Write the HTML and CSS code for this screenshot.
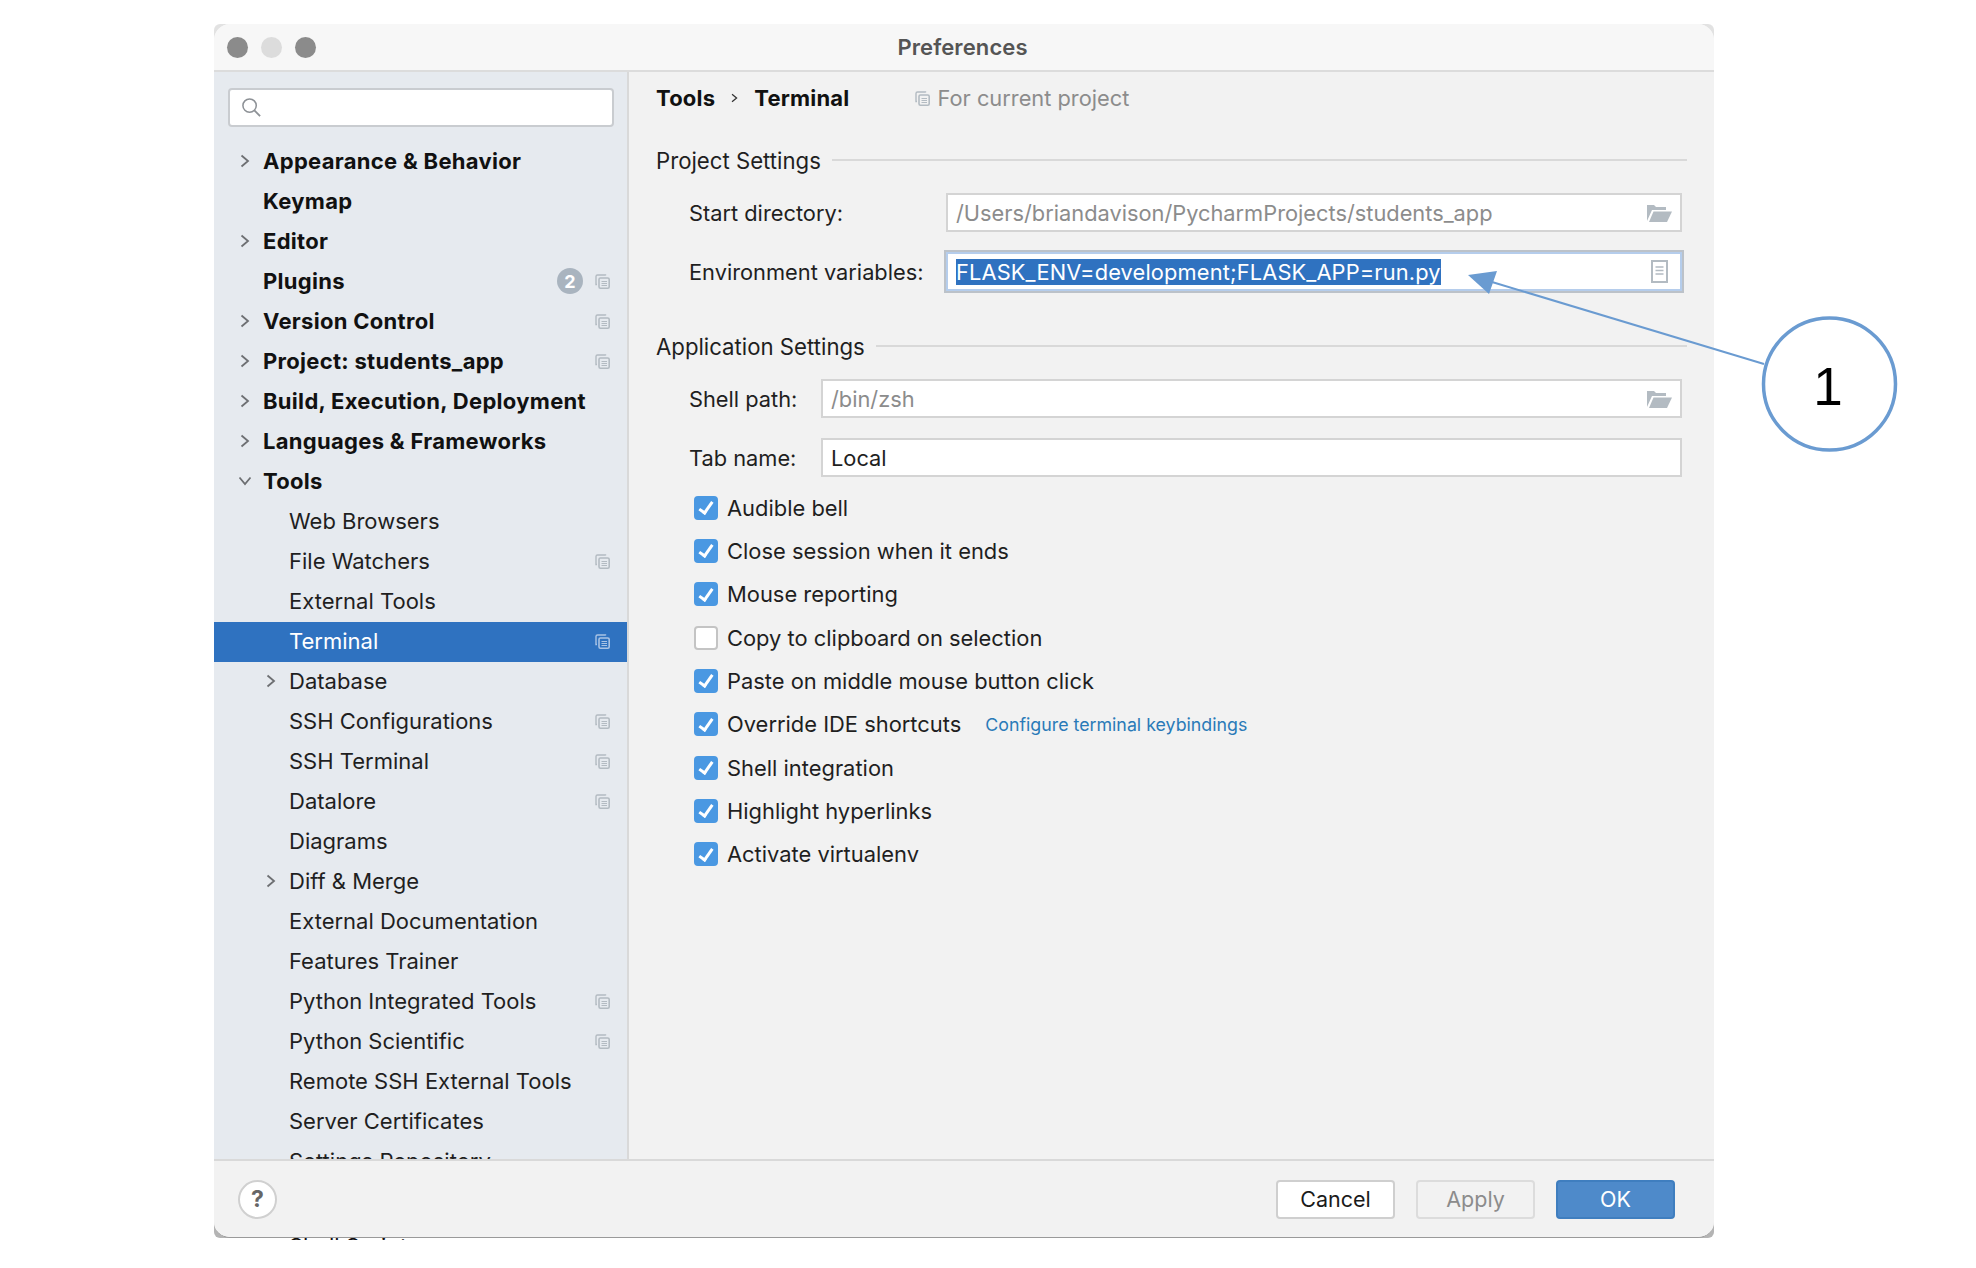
FILE: index.html
```html
<!DOCTYPE html>
<html lang="en">
<head>
    <meta charset="UTF-8">
    <title>Preferences</title>
    <link rel="stylesheet" href="styles.css">
</head>
<body>
    <svg class="defs" width="0" height="0">
        <symbol id="copy" viewBox="0 0 15 15">
            <path d="M10.5 1.5V1H2.5A1.5 1.5 0 0 0 1 2.5V10.5H2" fill="none" stroke="currentColor" stroke-width="1.4"/>
            <rect x="4" y="4" width="10.2" height="10.2" rx="1.4" fill="none" stroke="currentColor" stroke-width="1.6"/>
            <path d="M6.5 7.5h5.5M6.5 9.5h5.5M6.5 11.5h5.5" stroke="currentColor" stroke-width="1.1"/>
        </symbol>
        <symbol id="chevron" viewBox="0 0 10 14">
            <path d="M1.5 1.5L8 7L1.5 12.5" fill="none" stroke="currentColor" stroke-width="1.8"/>
        </symbol>
        <symbol id="folder" viewBox="0 0 26 18">
            <path d="M1 17V1H8L10 3H20V6H6L1 17Z" fill="currentColor"/>
            <path d="M3 18L7.5 7.5H26L21 18Z" fill="currentColor"/>
        </symbol>
    </svg>

    <div class="frame">
    <div class="window">
        <div class="titlebar">
            <div class="lights">
                <span class="light"></span>
                <span class="light light-off"></span>
                <span class="light"></span>
            </div>
            <div class="title">Preferences</div>
        </div>

        <div class="main">
            <div class="sidebar">
                <div class="search">
                    <svg class="search-icon" viewBox="0 0 22 22"><circle cx="9" cy="9" r="7" fill="none" stroke="#8d9196" stroke-width="1.6"/><path d="M14 14L20 20" stroke="#8d9196" stroke-width="2"/></svg>
                </div>
                <div class="tree">
                    <div class="row top"><svg class="chev"><use href="#chevron"/></svg><span class="name">Appearance &amp; Behavior</span></div>
                    <div class="row top"><span class="name">Keymap</span></div>
                    <div class="row top"><svg class="chev"><use href="#chevron"/></svg><span class="name">Editor</span></div>
                    <div class="row top"><span class="name">Plugins</span><span class="badge">2</span><svg class="copy"><use href="#copy"/></svg></div>
                    <div class="row top"><svg class="chev"><use href="#chevron"/></svg><span class="name">Version Control</span><svg class="copy"><use href="#copy"/></svg></div>
                    <div class="row top"><svg class="chev"><use href="#chevron"/></svg><span class="name">Project: students_app</span><svg class="copy"><use href="#copy"/></svg></div>
                    <div class="row top"><svg class="chev"><use href="#chevron"/></svg><span class="name">Build, Execution, Deployment</span></div>
                    <div class="row top"><svg class="chev"><use href="#chevron"/></svg><span class="name">Languages &amp; Frameworks</span></div>
                    <div class="row top"><svg class="chev chev-open"><use href="#chevron"/></svg><span class="name">Tools</span></div>
                    <div class="row sub"><span class="name">Web Browsers</span></div>
                    <div class="row sub"><span class="name">File Watchers</span><svg class="copy"><use href="#copy"/></svg></div>
                    <div class="row sub"><span class="name">External Tools</span></div>
                    <div class="row sub selected"><span class="name">Terminal</span><svg class="copy"><use href="#copy"/></svg></div>
                    <div class="row sub"><svg class="chev"><use href="#chevron"/></svg><span class="name">Database</span></div>
                    <div class="row sub"><span class="name">SSH Configurations</span><svg class="copy"><use href="#copy"/></svg></div>
                    <div class="row sub"><span class="name">SSH Terminal</span><svg class="copy"><use href="#copy"/></svg></div>
                    <div class="row sub"><span class="name">Datalore</span><svg class="copy"><use href="#copy"/></svg></div>
                    <div class="row sub"><span class="name">Diagrams</span></div>
                    <div class="row sub"><svg class="chev"><use href="#chevron"/></svg><span class="name">Diff &amp; Merge</span></div>
                    <div class="row sub"><span class="name">External Documentation</span></div>
                    <div class="row sub"><span class="name">Features Trainer</span></div>
                    <div class="row sub"><span class="name">Python Integrated Tools</span><svg class="copy"><use href="#copy"/></svg></div>
                    <div class="row sub"><span class="name">Python Scientific</span><svg class="copy"><use href="#copy"/></svg></div>
                    <div class="row sub"><span class="name">Remote SSH External Tools</span></div>
                    <div class="row sub"><span class="name">Server Certificates</span></div>
                    <div class="row sub"><span class="name">Settings Repository</span></div>
                </div>
            </div>

            <div class="content">
                <div class="crumbs">
                    <span class="crumb">Tools</span>
                    <svg class="crumb-sep"><use href="#chevron"/></svg>
                    <span class="crumb">Terminal</span>
                    <svg class="copy crumb-copy"><use href="#copy"/></svg>
                    <span class="scope">For current project</span>
                </div>

                <div class="section-title">Project Settings<span class="rule"></span></div>
                <div class="field-row">
                    <label class="label label-wide">Start directory:</label>
                    <div class="field muted">/Users/briandavison/PycharmProjects/students_app<svg class="folder"><use href="#folder"/></svg></div>
                </div>
                <div class="field-row">
                    <label class="label label-wide">Environment variables:</label>
                    <div class="field focused"><span class="picked">FLASK_ENV=development;FLASK_APP=run.py</span>
                        <svg class="doc" viewBox="0 0 17 23"><rect x="1" y="1" width="15" height="21" fill="none" stroke="#b3bbc2" stroke-width="2"/><path d="M4.5 7h8M4.5 10.5h8M4.5 14h8" stroke="#b3bbc2" stroke-width="1.5"/></svg>
                    </div>
                </div>

                <div class="section-title section-gap">Application Settings<span class="rule"></span></div>
                <div class="field-row">
                    <label class="label">Shell path:</label>
                    <div class="field muted">/bin/zsh<svg class="folder"><use href="#folder"/></svg></div>
                </div>
                <div class="field-row">
                    <label class="label">Tab name:</label>
                    <div class="field">Local</div>
                </div>

                <div class="checks">
                    <div class="check-row"><span class="box on"></span>Audible bell</div>
                    <div class="check-row"><span class="box on"></span>Close session when it ends</div>
                    <div class="check-row"><span class="box on"></span>Mouse reporting</div>
                    <div class="check-row"><span class="box"></span>Copy to clipboard on selection</div>
                    <div class="check-row"><span class="box on"></span>Paste on middle mouse button click</div>
                    <div class="check-row"><span class="box on"></span>Override IDE shortcuts<a class="link">Configure terminal keybindings</a></div>
                    <div class="check-row"><span class="box on"></span>Shell integration</div>
                    <div class="check-row"><span class="box on"></span>Highlight hyperlinks</div>
                    <div class="check-row"><span class="box on"></span>Activate virtualenv</div>
                </div>
            </div>
        </div>

        <div class="footer">
            <div class="help">?</div>
            <div class="buttons">
                <button class="btn">Cancel</button>
                <button class="btn btn-off">Apply</button>
                <button class="btn btn-ok">OK</button>
            </div>
        </div>
    </div>
    </div>

    <!-- tops of the next list row, showing under the window -->
    <div class="peek">Shell Scripts</div>

    <!-- callout over the window -->
    <svg class="callout" width="1976" height="1268" viewBox="0 0 1976 1268">
        <path d="M1492 282L1764 364" stroke="#6a9bd1" stroke-width="2" fill="none"/>
        <path d="M1468 275L1497 271L1489 294Z" fill="#6a9bd1"/>
        <circle cx="1829.5" cy="384" r="66" fill="#fff" stroke="#6a9bd1" stroke-width="3.5"/>
        <text class="callout-num" x="1828" y="405" text-anchor="middle">1</text>
    </svg>
</body>
</html>
```

FILE: styles.css
```css
body {
    margin: 0;
    padding: 24px 0 0 214px;
    background: #fff;
    font-family: "Inter", "Liberation Sans", sans-serif;
    color: #1f1f1f;
    overflow: hidden;
}

.defs {
    position: absolute;
}

/* grey wedges left in the window corners */
.frame {
    width: 1500px;
    height: 1214px;
    background: linear-gradient(#e2e2e2 50%, #b4b4b4 50%);
    border-radius: 6px;
}

.window {
    display: flex;
    flex-direction: column;
    height: 1214px;
    background: #f2f2f2;
    border-radius: 16px;
    overflow: hidden;
    box-sizing: border-box;
    border-bottom: 1px solid #9a9a9a;
}

.peek {
    height: 2px;
    padding-left: 75px;
    overflow: hidden;
    font-size: 22px;
    line-height: 16px;
    color: #111;
}

/* title bar */
.titlebar {
    display: flex;
    align-items: center;
    flex: none;
    position: relative;
    height: 46px;
    background: #f7f7f7;
    border-bottom: 2px solid #dcdcdc;
}

.lights {
    display: flex;
    gap: 13px;
    padding-left: 13px;
}

.light {
    width: 21px;
    height: 21px;
    border-radius: 50%;
    background: #8b8b8b;
}

.light-off {
    background: #dcdcdc;
}

.title {
    position: absolute;
    left: 0;
    right: 3px;
    text-align: center;
    font-size: 22px;
    font-weight: 600;
    letter-spacing: 0.1px;
    color: #555;
}

.main {
    display: flex;
    flex: 1;
    min-height: 0;
}

/* left tree */
.sidebar {
    flex: none;
    width: 413px;
    background: #e6eaef;
    border-right: 2px solid #d9d9d9;
    overflow: hidden;
}

.search {
    display: flex;
    align-items: center;
    height: 35px;
    margin: 16px 13px 15px 14px;
    padding-left: 11px;
    background: #fff;
    border: 2px solid #c9ccd0;
    border-radius: 4px;
}

.search-icon {
    width: 21px;
    height: 21px;
}

.row {
    display: flex;
    align-items: center;
    position: relative;
    box-sizing: border-box;
    height: 40px;
    padding-bottom: 2px;
    font-size: 22px;
}

.row.top {
    padding-left: 49px;
    font-weight: 700;
    letter-spacing: 0.3px;
    color: #111;
}

.row.sub {
    padding-left: 75px;
}

.row.selected {
    background: #2f72c0;
    color: #fff;
}

.chev {
    position: absolute;
    left: 26px;
    width: 10px;
    height: 14px;
    color: #6d6f72;
}

.row.sub .chev {
    left: 52px;
}

.chev-open {
    transform: rotate(90deg);
}

.copy {
    width: 15px;
    height: 15px;
    margin-left: auto;
    margin-right: 17px;
    flex: none;
    color: #b3bbc2;
}

.selected .copy {
    color: #a9c3e4;
}

.badge {
    display: flex;
    align-items: center;
    justify-content: center;
    width: 26px;
    height: 26px;
    margin-left: auto;
    border-radius: 50%;
    background: #a9b4bf;
    color: #fff;
    font-size: 18px;
    font-weight: 700;
}

.badge + .copy {
    margin-left: 12px;
}

/* right panel */
.content {
    flex: 1;
    padding: 10px 32px 0 27px;
    min-width: 0;
}

.crumbs {
    display: flex;
    align-items: center;
    height: 32px;
    font-size: 22px;
}

.crumb {
    font-weight: 700;
    letter-spacing: 0.2px;
    color: #111;
}

.crumb-sep {
    width: 7px;
    height: 10px;
    margin: 0 16px;
    color: #333;
}

.crumb-copy {
    margin: 0 8px 0 65px;
}

.scope {
    font-size: 21.8px;
    color: #8c8c8c;
}

.section-title {
    display: flex;
    align-items: center;
    height: 32px;
    margin-top: 30px;
    font-size: 22.2px;
    margin-right: -5px;
}

.section-gap {
    margin-top: 39px;
}

.rule {
    flex: 1;
    height: 2px;
    margin-left: 11px;
    background: #d9d9d9;
}

.field-row {
    display: flex;
    align-items: center;
    margin-top: 20px;
    padding-left: 33px;
    font-size: 21.8px;
}

.section-title + .field-row {
    margin-top: 17px;
}

.label {
    width: 132px;
    flex: none;
}

.label-wide {
    width: 257px;
}

.field {
    display: flex;
    align-items: center;
    justify-content: space-between;
    flex: 1;
    box-sizing: border-box;
    height: 39px;
    padding: 0 8px;
    background: #fff;
    border: 2px solid #d4d4d4;
}

.field.muted {
    color: #8c8c8c;
}

.field.focused {
    border-color: #b5cdec;
    box-shadow: 0 0 0 2px #bcc2c9;
}

.picked {
    background: #2f72c0;
    color: #fff;
    line-height: 26px;
    letter-spacing: 0.15px;
}

.folder {
    width: 26px;
    height: 18px;
    color: #b3bbc2;
}

.doc {
    width: 17px;
    height: 23px;
    margin-right: 4px;
}

.checks {
    margin-top: 9px;
    padding-left: 38px;
}

.check-row {
    display: flex;
    align-items: center;
    height: 43.33px;
    font-size: 21.9px;
}

.box {
    position: relative;
    box-sizing: border-box;
    width: 24px;
    height: 24px;
    margin-right: 9px;
    background: #fff;
    border: 2px solid #c4c4c4;
    border-radius: 4px;
}

.box.on {
    background: #4a98e2;
    border-color: #4a98e2;
}

/* tick */
.box.on::after {
    content: "";
    position: absolute;
    left: 6px;
    top: 1.5px;
    width: 5px;
    height: 12px;
    border: solid #fff;
    border-width: 0 3px 3px 0;
    transform: rotate(35deg);
}

.link {
    margin-left: 24px;
    font-size: 17.8px;
    color: #2a7ab8;
}

/* bottom bar */
.footer {
    display: flex;
    align-items: center;
    justify-content: space-between;
    flex: none;
    box-sizing: border-box;
    height: 78px;
    padding: 0 39px 0 24px;
    background: #f2f2f2;
    border-top: 2px solid #d9d9d9;
}

.help {
    display: flex;
    align-items: center;
    justify-content: center;
    box-sizing: border-box;
    width: 39px;
    height: 39px;
    background: #fff;
    border: 2px solid #d0d0d0;
    border-radius: 50%;
    color: #666;
    font-size: 23px;
    font-weight: 700;
}

.buttons {
    display: flex;
    gap: 21px;
}

.btn {
    box-sizing: border-box;
    width: 119px;
    height: 39px;
    padding: 0;
    background: #fff;
    border: 2px solid #cfcfcf;
    border-radius: 4px;
    color: #1a1a1a;
    font-family: inherit;
    font-size: 21.5px;
}

.btn-off {
    background: #f2f2f2;
    border-color: #dcdcdc;
    color: #8c8c8c;
}

.btn-ok {
    background: #4e8aca;
    border-color: #3f7ebf;
    color: #fff;
}

/* numbered callout */
.callout {
    position: absolute;
    left: 0;
    top: 0;
}

.callout-num {
    font-family: "Liberation Sans", sans-serif;
    font-size: 53px;
    fill: #000;
}
```
